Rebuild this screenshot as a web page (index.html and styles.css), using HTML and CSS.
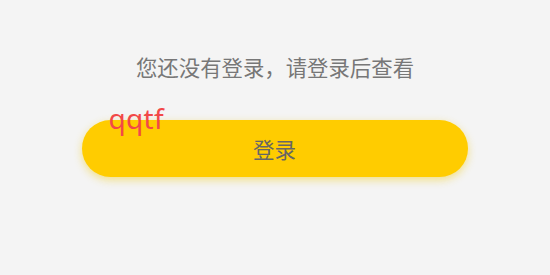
FILE: index.html
```html
<!DOCTYPE html>
<html>
<head>
<meta charset="utf-8">
<link rel="stylesheet" href="styles.css">
</head>
<body>
<div class="page">
  <p class="tip">您还没有登录，请登录后查看</p>
  <div class="btn-wrap">
    <button class="login-btn">登录</button>
    <span class="tag">qqtf</span>
  </div>
</div>
</body>
</html>
```
FILE: styles.css
```css
html, body {
  margin: 0;
  padding: 0;
  background: #f4f4f4;
  width: 550px;
  height: 275px;
  overflow: hidden;
}
.page {
  display: flex;
  flex-direction: column;
  align-items: center;
  padding-top: 52px;
  font-family: "Noto Sans CJK SC", "Noto Sans", sans-serif;
}
.tip {
  margin: 0;
  font-size: 21.4px;
  line-height: 30px;
  color: #777777;
}
.btn-wrap {
  position: relative;
  margin-top: 38px;
  margin-left: -1px;
}
.login-btn {
  display: block;
  width: 386px;
  height: 57px;
  border: none;
  border-radius: 28.5px;
  background: #ffcc00;
  box-shadow: 0 3px 8px rgba(240, 200, 0, 0.45);
  font-family: "Noto Sans CJK SC", "Noto Sans", sans-serif;
  font-size: 21.5px;
  color: #666666;
  padding: 0;
}
.tag {
  position: absolute;
  left: 27px;
  top: -20px;
  font-family: "Noto Sans", sans-serif;
  font-size: 28px;
  line-height: 36px;
  letter-spacing: 0.3px;
  color: #f24848;
}
```
